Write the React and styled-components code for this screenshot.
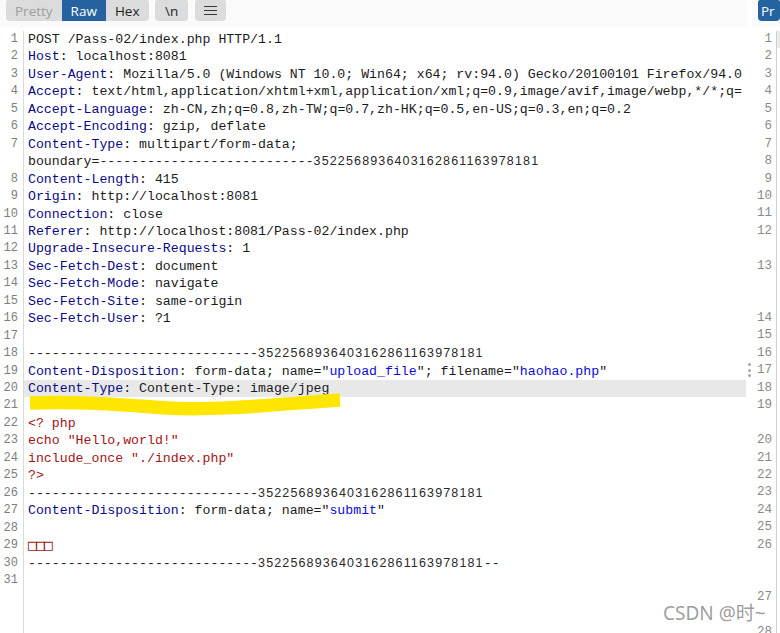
import styled, { createGlobalStyle } from 'styled-components';

const ROW = 17.45;

const GlobalStyle = createGlobalStyle`
  html, body {
    margin: 0;
    padding: 0;
    background: #ffffff;
  }
`;

const DASH_HEAD = '---------------------------';
const DASH_BODY = '-----------------------------';
const DIGITS = '3522568936403162861163978181';

const header = (key, val) => [[['k', key], ['v', ': ' + val]]];

// each line = list of visual rows, each row = list of [kind, text]
const lines = [
  [[['v', 'POST /Pass-02/index.php HTTP/1.1']]],
  header('Host', 'localhost:8081'),
  header('User-Agent', 'Mozilla/5.0 (Windows NT 10.0; Win64; x64; rv:94.0) Gecko/20100101 Firefox/94.0'),
  header('Accept', 'text/html,application/xhtml+xml,application/xml;q=0.9,image/avif,image/webp,*/*;q='),
  header('Accept-Language', 'zh-CN,zh;q=0.8,zh-TW;q=0.7,zh-HK;q=0.5,en-US;q=0.3,en;q=0.2'),
  header('Accept-Encoding', 'gzip, deflate'),
  [
    [['k', 'Content-Type'], ['v', ': multipart/form-data;']],
    [['v', 'boundary=' + DASH_HEAD], ['n', DIGITS]],
  ],
  header('Content-Length', '415'),
  header('Origin', 'http://localhost:8081'),
  header('Connection', 'close'),
  header('Referer', 'http://localhost:8081/Pass-02/index.php'),
  header('Upgrade-Insecure-Requests', '1'),
  header('Sec-Fetch-Dest', 'document'),
  header('Sec-Fetch-Mode', 'navigate'),
  header('Sec-Fetch-Site', 'same-origin'),
  header('Sec-Fetch-User', '?1'),
  [[]],
  [[['v', DASH_BODY], ['n', DIGITS]]],
  [[
    ['k', 'Content-Disposition'],
    ['v', ': form-data; name="'],
    ['s', 'upload_file'],
    ['v', '"; filename="'],
    ['s', 'haohao.php'],
    ['v', '"'],
  ]],
  header('Content-Type', 'Content-Type: image/jpeg'),
  [[]],
  [[['p', '<? php']]],
  [[['p', 'echo "Hello,world!"']]],
  [[['p', 'include_once "./index.php"']]],
  [[['p', '?>']]],
  [[['v', DASH_BODY], ['n', DIGITS]]],
  [[['k', 'Content-Disposition'], ['v', ': form-data; name="'], ['s', 'submit'], ['v', '"']]],
  [[]],
  [[['t', '\u25A1\u25A1\u25A1']]],
  [[['v', DASH_BODY], ['n', DIGITS], ['v', '--']]],
  [[]],
];

// rows taken by each line in the narrow right pane
const rightSpans = [1, 1, 1, 1, 1, 1, 1, 1, 1, 1, 1, 2, 3, 1, 1, 1, 1, 1, 2, 1, 1, 1, 1, 1, 1, 3, 2, 2];

const colors = {
  k: '#0a0a86',
  v: '#1c1c1c',
  s: '#0b0bdc',
  p: '#a31515',
  n: '#2a2a2a',
  t: '#9c1414',
};

const App = () => {
  return (
    <Page>
      <GlobalStyle />
      <LeftPane>
        <Toolbar>
          <Segmented>
            <ToolButton $muted>Pretty</ToolButton>
            <ToolButton $active>Raw</ToolButton>
            <ToolButton>Hex</ToolButton>
          </Segmented>
          <ToolButton $round>\n</ToolButton>
          <ToolButton $round $icon>
            <svg width="13" height="11" viewBox="0 0 13 11">
              <path d="M0 1.5h13M0 5.5h13M0 9.5h13" stroke="#3a3a3a" strokeWidth="1.1" fill="none" />
            </svg>
          </ToolButton>
        </Toolbar>
        <Editor>
          {lines.map((rows, i) => (
            <Row key={i}>
              <LineNo>{i + 1}</LineNo>
              <CodeCell $active={i === 19}>
                {rows.map((segs, j) => (
                  <CodeRow key={j}>
                    {segs.map(([kind, text], k) =>
                      kind === 'n' ? (
                        <Digits key={k}>{text}</Digits>
                      ) : kind === 't' ? (
                        <Tofu key={k}>{text}</Tofu>
                      ) : (
                        <Tok key={k} $kind={kind}>
                          {text}
                        </Tok>
                      )
                    )}
                  </CodeRow>
                ))}
              </CodeCell>
            </Row>
          ))}
          <Filler>
            <LineNo />
            <div />
          </Filler>
        </Editor>
      </LeftPane>
      <Splitter>
        <Dot />
        <Dot />
        <Dot />
      </Splitter>
      <RightPane>
        <Toolbar>
          <ToolButton $active $cut>Pr</ToolButton>
        </Toolbar>
        <Editor>
          {rightSpans.map((span, i) => (
            <RightRow key={i} $span={span}>
              <RightNo>{i + 1}</RightNo>
              <RightCode $active={i === 0} />
            </RightRow>
          ))}
        </Editor>
      </RightPane>
      <Brush width="320" height="30" viewBox="0 0 320 30">
        <path
          d="M2 12 C 55 10 95 14 140 17 S 255 13 312 9"
          stroke="#ffe600"
          strokeWidth="13.5"
          fill="none"
        />
      </Brush>
      <Watermark>CSDN @时~</Watermark>
    </Page>
  );
};

const Page = styled.div`
  position: relative;
  display: flex;
  width: 780px;
  height: 633px;
  overflow: hidden;
  background: #ffffff;
`;

const LeftPane = styled.div`
  width: 747px;
  flex: none;
  display: flex;
  flex-direction: column;
  overflow: hidden;
`;

const RightPane = styled.div`
  flex: 1;
  display: flex;
  flex-direction: column;
  overflow: hidden;
`;

const Toolbar = styled.div`
  height: 27px;
  flex: none;
  display: flex;
  align-items: flex-start;
  gap: 6.5px;
  padding-left: 6px;
  background: #fafafa;
`;

const Segmented = styled.div`
  display: flex;
  border-radius: 2px 2px 4px 4px;
  overflow: hidden;
`;

const ToolButton = styled.div`
  height: 21px;
  display: flex;
  align-items: center;
  justify-content: ${(p) => (p.$cut ? 'flex-start' : 'center')};
  padding: 0 ${(p) => (p.$cut ? '0 0 3px' : p.$round && !p.$icon ? '10px' : '9px')};
  border-radius: ${(p) => (p.$round || p.$cut ? '2px 2px 4px 4px' : '0')};
  background: ${(p) => (p.$active ? '#2563a0' : '#dcdcdc')};
  color: ${(p) => (p.$active ? '#ffffff' : p.$muted ? '#9c9c9c' : '#1e1e1e')};
  font-family: 'Open Sans', 'Liberation Sans', sans-serif;
  font-size: 13.5px;
  white-space: nowrap;
  flex: ${(p) => (p.$cut ? '1' : 'none')};
`;

const Editor = styled.div`
  flex: 1;
  display: flex;
  flex-direction: column;
  padding-top: 4px;
`;

const Row = styled.div`
  display: grid;
  grid-template-columns: 24px 1fr;
`;

const Filler = styled(Row)`
  flex: 1;
`;

const LineNo = styled.div`
  border-right: 1px solid #dadada;
  padding-right: 5px;
  text-align: right;
  font-family: 'Liberation Mono', monospace;
  font-size: 12px;
  line-height: ${ROW}px;
  color: #7e7e7e;
`;

const CodeCell = styled.div`
  padding-left: 4px;
  overflow: hidden;
  min-height: ${ROW}px;
  background: ${(p) => (p.$active ? '#e8e8e8' : 'transparent')};
  margin-right: ${(p) => (p.$active ? '1px' : '0')};
`;

const CodeRow = styled.div`
  height: ${ROW}px;
  white-space: pre;
  font-family: 'Liberation Mono', 'Courier New', monospace;
  font-size: 13.22px;
  line-height: ${ROW}px;
`;

const Tok = styled.span`
  color: ${(p) => colors[p.$kind]};
`;

const Digits = styled.span`
  font-family: 'Liberation Sans', sans-serif;
  font-size: 12.5px;
  letter-spacing: 1.14px;
  color: ${colors.n};
`;

const Tofu = styled.span`
  font-family: 'DejaVu Sans Mono', monospace;
  font-size: 15px;
  letter-spacing: -1.1px;
  color: ${colors.t};
`;

const Splitter = styled.div`
  width: 5px;
  flex: none;
  display: flex;
  flex-direction: column;
  align-items: center;
  gap: 2.5px;
  padding-top: 363px;
  background: #ffffff;
`;

const Dot = styled.span`
  width: 3px;
  height: 3px;
  border-radius: 50%;
  background: #a8a8a8;
`;

const RightRow = styled.div`
  display: grid;
  grid-template-columns: 25px 1fr;
  height: ${(p) => p.$span * ROW}px;
`;

const RightNo = styled.div`
  border-right: 1px solid #cfcfcf;
  padding-right: 4px;
  text-align: right;
  font-family: 'Liberation Mono', monospace;
  font-size: 12.5px;
  line-height: ${ROW}px;
  color: #8a8a8a;
`;

const RightCode = styled.div`
  height: ${ROW}px;
  background: ${(p) => (p.$active ? '#ececec' : 'transparent')};
`;

const Brush = styled.svg`
  position: absolute;
  left: 28px;
  top: 391px;
  pointer-events: none;
`;

const Watermark = styled.div`
  position: absolute;
  left: 663px;
  top: 601px;
  font-family: 'Noto Sans', 'Noto Sans CJK SC', sans-serif;
  font-size: 19px;
  line-height: 24px;
  color: rgba(140, 140, 140, 0.85);
  white-space: nowrap;
`;

export default App;
